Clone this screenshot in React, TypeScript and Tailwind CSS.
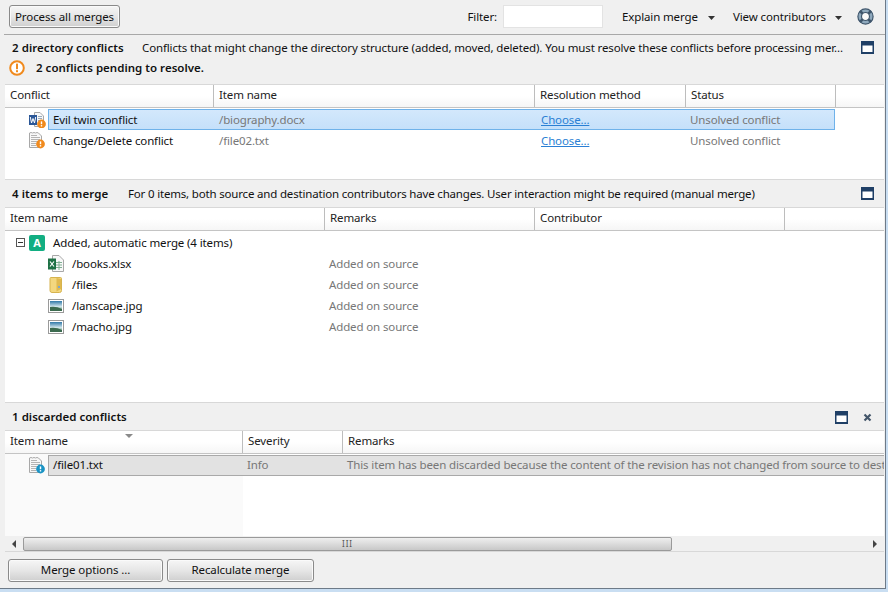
import React from "react";

const FONT = "font-['Noto_Sans','Open_Sans',sans-serif]";

function MaximizeIcon() {
    return (
        <svg width="13" height="13" viewBox="0 0 13 13">
            <rect x="0" y="0" width="13" height="13" fill="#1f3f66" />
            <rect x="1.5" y="4.5" width="10" height="6.5" fill="#fff" />
        </svg>
    );
}

function CloseIcon() {
    return (
        <svg width="9" height="9" viewBox="0 0 9 9">
            <path d="M1.5 1.5 L7.5 7.5 M7.5 1.5 L1.5 7.5" stroke="#44566a" strokeWidth="2.2" />
        </svg>
    );
}

function Caret() {
    return (
        <svg width="7" height="4" viewBox="0 0 7 4" className="mt-[3px]">
            <path d="M0 0 H7 L3.5 4 Z" fill="#333" />
        </svg>
    );
}

function LifeRing() {
    return (
        <svg width="17" height="17" viewBox="0 0 17 17">
            <circle cx="8.5" cy="8.5" r="5.8" fill="none" stroke="#8fa9bd" strokeWidth="3.6" />
            <circle cx="8.5" cy="8.5" r="7.6" fill="none" stroke="#3f566c" strokeWidth="1.2" />
            <circle cx="8.5" cy="8.5" r="4" fill="#fafafa" stroke="#3f566c" strokeWidth="1.2" />
            <path d="M3 3 L5.8 5.8 M14 3 L11.2 5.8 M3 14 L5.8 11.2 M14 14 L11.2 11.2" stroke="#3f566c" strokeWidth="2.6" />
        </svg>
    );
}

function WarnBig() {
    return (
        <svg width="16" height="16" viewBox="0 0 16 16">
            <circle cx="8" cy="8" r="6.8" fill="#fff" stroke="#f08a1d" strokeWidth="2" />
            <rect x="7" y="3.6" width="2" height="5.6" fill="#f08a1d" />
            <rect x="7" y="10.2" width="2" height="2" fill="#f08a1d" />
        </svg>
    );
}

function Badge({ color }: { color: string }) {
    return (
        <g>
            <circle cx="11.5" cy="12" r="4.4" fill={color} />
            <rect x="10.8" y="9.4" width="1.4" height="2.8" fill="#fff" />
            <rect x="10.8" y="13.1" width="1.4" height="1.4" fill="#fff" />
        </g>
    );
}

function Paper() {
    return (
        <g>
            <path d="M0.5 1 L2 0.5 L3.5 1 L5 0.5 L6.5 1 L8 0.5 L9.5 1 L12.5 4 V15.5 H0.5 Z" fill="#f8f8f8" stroke="#a8a8a8" />
            <path d="M2 3.5 H8 M2 5.5 H11 M2 7.5 H11 M2 9.5 H11 M2 11.5 H7 M2 13.5 H7" stroke="#b4b4b4" strokeWidth="1" />
        </g>
    );
}

function WordWarnIcon() {
    return (
        <svg width="17" height="17" viewBox="0 0 17 17">
            <g transform="translate(1 1)">
                <path d="M4.5 0.5 H10 L13.5 4 V14.5 H4.5 Z" fill="#f8f8f8" stroke="#a8a8a8" />
                <path d="M8 4.5 H12 M8 6.5 H12 M8 8.5 H12" stroke="#9ab" strokeWidth="1" />
                <rect x="-1" y="3" width="8" height="10" fill="#2b5797" />
                <path d="M0.3 5 L1.5 11 L3 6.5 L4.5 11 L5.7 5" stroke="#fff" strokeWidth="1" fill="none" />
                <Badge color="#f08a1d" />
            </g>
        </svg>
    );
}

function TextBadgeIcon({ color }: { color: string }) {
    return (
        <svg width="16" height="17" viewBox="0 0 16 17">
            <Paper />
            <Badge color={color} />
        </svg>
    );
}

function ExcelIcon() {
    return (
        <svg width="16" height="17" viewBox="0 0 16 17">
            <path d="M4.5 0.5 H11 L15.5 5 V16.5 H4.5 Z" fill="#f8f8f8" stroke="#a8a8a8" />
            <path d="M8 7.5 H14 M8 10 H14 M8 12.5 H14 M11 6 V15" stroke="#7fae92" strokeWidth="1" />
            <rect x="0" y="3.5" width="8" height="11" fill="#1e7145" />
            <path d="M2 6.5 L6 11.5 M6 6.5 L2 11.5" stroke="#fff" strokeWidth="1.2" />
        </svg>
    );
}

function FolderIcon() {
    return (
        <svg width="14" height="16" viewBox="0 0 14 16">
            <path d="M1 1.5 Q1 0.5 2 0.5 H11.5 Q12.5 0.5 12.5 1.5 V13.5 Q12.5 15.5 10.5 15.5 H3 Q1 15.5 1 13.5 Z" fill="#f3d77f" stroke="#d6b34e" />
            <path d="M7.5 1 V14.5 L12 12 V2 Z" fill="#e0b94f" />
            <rect x="9" y="9" width="2" height="2" fill="#7da7cf" />
        </svg>
    );
}

function ImageIcon() {
    return (
        <svg width="16" height="14" viewBox="0 0 16 14">
            <rect x="0.5" y="0.5" width="15" height="13" fill="#fff" stroke="#9a9a9a" />
            <defs>
                <linearGradient id="sky" x1="0" y1="0" x2="0" y2="1">
                    <stop offset="0" stopColor="#2f78a8" />
                    <stop offset="0.55" stopColor="#cfe4ea" />
                    <stop offset="1" stopColor="#4f8a5e" />
                </linearGradient>
            </defs>
            <rect x="2" y="2" width="12" height="10" fill="url(#sky)" />
            <path d="M2 8 Q8 7 14 10 V12 H2 Z" fill="#3c6b4f" />
        </svg>
    );
}

function ToolButton({ children, className }: { children: React.ReactNode; className: string }) {
    return (
        <button className={`h-[23px] rounded-[3px] border border-[#8a8a8a] bg-gradient-to-b from-[#f6f6f6] via-[#e6e6e6] to-[#cfcfcf] text-[11.5px] tracking-[-0.1px] text-[#111] shadow-[inset_0_0_0_1px_#fafafa] whitespace-nowrap ${className}`}>
            {children}
        </button>
    );
}

function HeaderCell({ label, width, grow }: { label?: string; width?: string; grow?: boolean }) {
    return (
        <div className={`h-full pl-[5px] pb-[2px] border-r border-[#bdbdbd] last:border-r-0 flex items-center shrink-0 ${width ?? ""} ${grow ? "flex-1" : ""}`}>
            {label}
        </div>
    );
}

function TableHeader({ children }: { children: React.ReactNode }) {
    return (
        <div className="h-[23px] flex border-b border-[#c4c4c4] bg-gradient-to-b from-white from-50% to-[#f6f6f6] text-[#222]">
            {children}
        </div>
    );
}

export default function App() {
    return (
        <div className={`${FONT} w-[888px] h-[592px] overflow-hidden bg-[#c9def2] text-[11.5px] tracking-[-0.13px] text-[#111] whitespace-nowrap`}>
            <div className="w-[886px] h-[589px] bg-[#f0f0f0] border-r border-b border-[#6d7a88] flex flex-col pl-[4px]">
                {/* Toolbar */}
                <div className="h-[35px] shrink-0 flex items-center border-b border-[#a8a8a8] pl-[5px] pb-[1px]">
                    <ToolButton className="w-[111px]">Process all merges</ToolButton>
                    <span className="w-[383px] shrink-0 text-right pr-[6px]">Filter:</span>
                    <div className="w-[100px] h-[23px] bg-white border border-[#e3e3e3] shrink-0" />
                    <span className="ml-[19px] w-[73px] shrink-0">Explain merge</span>
                    <span className="ml-[13px] shrink-0"><Caret /></span>
                    <span className="ml-[18px] w-[94px] shrink-0">View contributors</span>
                    <span className="ml-[8px] shrink-0"><Caret /></span>
                    <span className="ml-[15px] shrink-0 flex"><LifeRing /></span>
                </div>

                {/* Directory conflicts */}
                <div className="h-[49px] shrink-0 pl-[8px] pr-[11px] pt-[3px]">
                    <div className="h-[20px] flex items-center">
                        <b className="font-semibold tracking-[0.06px] w-[130px] shrink-0">2 directory conflicts</b>
                        <span className="flex-1 min-w-0">Conflicts that might change the directory structure (added, moved, deleted). You must resolve these conflicts before processing mer...</span>
                        <span className="ml-[14px] shrink-0 flex -mt-[2px]"><MaximizeIcon /></span>
                    </div>
                    <div className="h-[20px] flex items-center -ml-[3px]">
                        <WarnBig />
                        <b className="font-semibold tracking-[0.02px] ml-[11px]">2 conflicts pending to resolve.</b>
                    </div>
                </div>
                <div className="h-[96px] shrink-0 mx-[1px] bg-white border-t border-b border-[#d8d8d8]">
                    <TableHeader>
                        <HeaderCell label="Conflict" width="w-[209px]" />
                        <HeaderCell label="Item name" width="w-[321px]" />
                        <HeaderCell label="Resolution method" width="w-[151px]" />
                        <HeaderCell label="Status" width="w-[150px]" />
                        <HeaderCell grow />
                    </TableHeader>
                    <div className="pt-[1px]">
                        <div className="h-[21px] flex items-center">
                            <div className="w-[43px] flex justify-end pr-[2px] shrink-0"><WordWarnIcon /></div>
                            <div className="w-[787px] h-full flex items-center border border-[#6fb2ea] bg-gradient-to-b from-[#d3e8fc] to-[#c5e0fa] pt-[1px]">
                                <span className="w-[165px] pl-[4px] shrink-0">Evil twin conflict</span>
                                <span className="w-[322px] pl-[5px] shrink-0 text-[#777]">/biography.docx</span>
                                <span className="w-[150px] pl-[5px] shrink-0 text-[#2a7fd4] underline">Choose...</span>
                                <span className="pl-[4px] text-[#777]">Unsolved conflict</span>
                            </div>
                        </div>
                        <div className="h-[21px] flex items-center">
                            <div className="w-[43px] flex justify-end pr-[3px] shrink-0"><TextBadgeIcon color="#f08a1d" /></div>
                            <div className="flex items-center pl-[1px]">
                                <span className="w-[165px] pl-[4px] shrink-0">Change/Delete conflict</span>
                                <span className="w-[322px] pl-[5px] shrink-0 text-[#777]">/file02.txt</span>
                                <span className="w-[150px] pl-[5px] shrink-0 text-[#2a7fd4] underline">Choose...</span>
                                <span className="pl-[4px] text-[#777]">Unsolved conflict</span>
                            </div>
                        </div>
                    </div>
                </div>

                {/* Items to merge */}
                <div className="h-[27px] shrink-0 pl-[8px] pr-[11px] flex items-center">
                    <b className="font-semibold tracking-[0.06px] w-[116px] shrink-0">4 items to merge</b>
                    <span className="flex-1 min-w-0 tracking-[-0.18px]">For 0 items, both source and destination contributors have changes. User interaction might be required (manual merge)</span>
                    <MaximizeIcon />
                </div>
                <div className="h-[196px] shrink-0 mx-[1px] bg-white border-t border-b border-[#d8d8d8]">
                    <TableHeader>
                        <HeaderCell label="Item name" width="w-[320px]" />
                        <HeaderCell label="Remarks" width="w-[210px]" />
                        <HeaderCell label="Contributor" width="w-[250px]" />
                        <HeaderCell grow />
                    </TableHeader>
                    <div className="pt-[1px]">
                        <div className="h-[21px] flex items-center pl-[11px]">
                            <span className="w-[9px] h-[9px] border border-[#555] flex items-center justify-center shrink-0">
                                <span className="w-[5px] h-[1px] bg-[#333]" />
                            </span>
                            <span className="ml-[4px] w-[16px] h-[16px] rounded-[2px] bg-[#12ae82] text-white font-bold text-[11px] leading-[16px] text-center shrink-0">A</span>
                            <span className="ml-[8px]">Added, automatic merge (4 items)</span>
                        </div>
                        {[
                            { name: "/books.xlsx", icon: <ExcelIcon /> },
                            { name: "/files", icon: <FolderIcon /> },
                            { name: "/lanscape.jpg", icon: <ImageIcon /> },
                            { name: "/macho.jpg", icon: <ImageIcon /> },
                        ].map(row => (
                            <div key={row.name} className="h-[21px] flex items-center">
                                <div className="w-[16px] shrink-0 flex justify-center ml-[43px]">{row.icon}</div>
                                <span className="w-[261px] shrink-0 pl-[8px]">{row.name}</span>
                                <span className="pl-[4px] text-[#777]">Added on source</span>
                            </div>
                        ))}
                    </div>
                </div>

                {/* Discarded conflicts */}
                <div className="h-[27px] shrink-0 pl-[8px] pr-[11px] pt-[1px] flex items-center">
                    <b className="font-semibold tracking-[0.03px] flex-1">1 discarded conflicts</b>
                    <MaximizeIcon />
                    <span className="ml-[15px] mr-[2px] flex"><CloseIcon /></span>
                </div>
                <div className="h-[122px] shrink-0 mx-[1px] bg-white border-t border-b border-[#d8d8d8] flex flex-col relative">
                    <TableHeader>
                        <HeaderCell label="Item name" width="w-[238px]" />
                        <HeaderCell label="Severity" width="w-[100px]" />
                        <HeaderCell label="Remarks" grow />
                    </TableHeader>
                    <svg width="8" height="4" viewBox="0 0 8 4" className="absolute left-[120px] top-[3px]">
                        <path d="M0 0 H8 L4 4 Z" fill="#8a8a8a" />
                    </svg>
                    <div className="flex-1 flex flex-col bg-[linear-gradient(to_right,#fafafa_238px,#ffffff_238px)] pt-[1px] min-h-0">
                        <div className="h-[21px] flex items-center shrink-0">
                            <div className="w-[43px] flex justify-end pr-[3px] shrink-0"><TextBadgeIcon color="#1a93c4" /></div>
                            <div className="flex-1 min-w-0 h-full flex items-center border-y border-l border-[#a9a9a9] bg-[#e2e2e2] overflow-hidden pb-[1px]">
                                <span className="w-[194px] pl-[4px] shrink-0">/file01.txt</span>
                                <span className="w-[100px] pl-[4px] shrink-0 text-[#777]">Info</span>
                                <span className="pl-[4px] text-[#777]">This item has been discarded because the content of the revision has not changed from source to destination</span>
                            </div>
                        </div>
                        <div className="flex-1" />
                        <div className="h-[15px] shrink-0 flex items-center bg-[#f0f0f0]">
                            <span className="w-[18px] flex justify-center shrink-0">
                                <span className="border-y-[4px] border-r-[4px] border-y-transparent border-r-[#444]" />
                            </span>
                            <div className="w-[649px] h-[14px] rounded-[2px] border border-[#9a9a9a] bg-gradient-to-b from-[#efefef] to-[#c8c8c8] flex items-center justify-center text-[8px] text-[#555] leading-none tracking-[1px]">III</div>
                            <span className="ml-auto w-[18px] flex justify-center shrink-0">
                                <span className="border-y-[4px] border-l-[4px] border-y-transparent border-l-[#444]" />
                            </span>
                        </div>
                    </div>
                </div>

                {/* Bottom buttons */}
                <div className="flex-1 flex items-center gap-[4px] pl-[4px]">
                    <ToolButton className="w-[155px]">Merge options ...</ToolButton>
                    <ToolButton className="w-[147px]">Recalculate merge</ToolButton>
                </div>
            </div>
        </div>
    );
}
